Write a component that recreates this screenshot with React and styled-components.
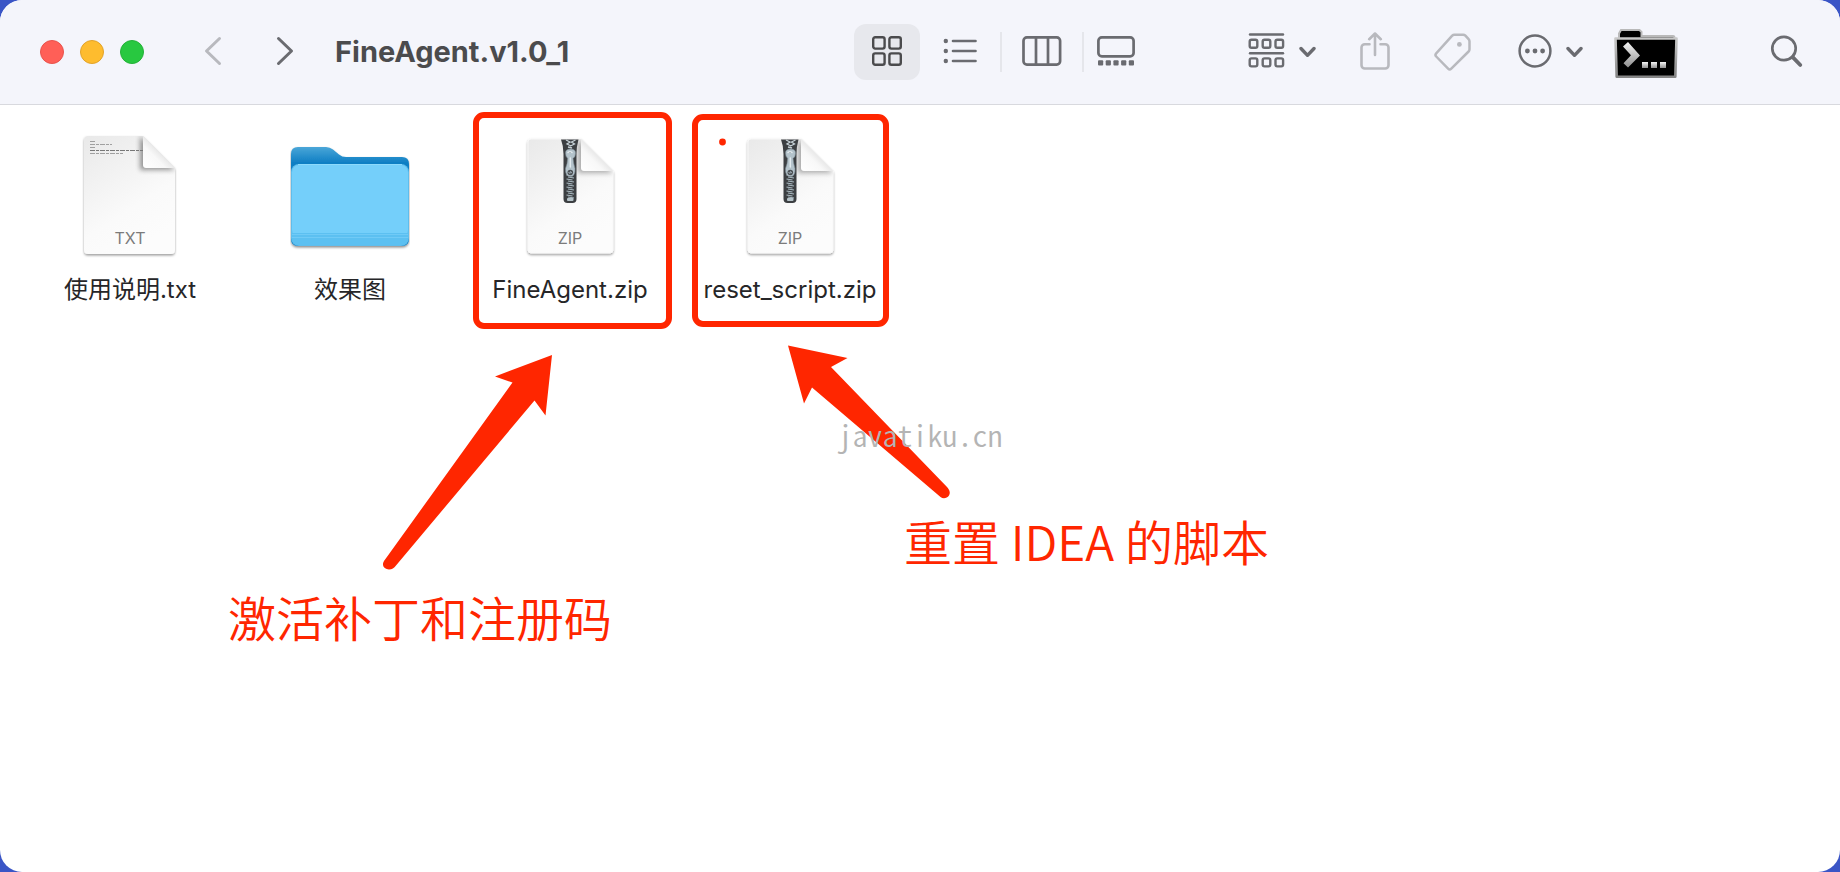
import React from 'react';
import styled, { createGlobalStyle } from 'styled-components';

const theme = {
  font: 'Inter, "Noto Sans CJK SC", sans-serif',
  desktop: '#3a55c6',
  toolbar: '#f4f5fb',
  line: '#d8d9de',
  icon: '#6a6b70',
  iconDim: '#b8b9be',
  red: '#ff2600',
};

const GlobalStyle = createGlobalStyle`
  * { box-sizing: border-box; }
  body {
    margin: 0;
    background: ${theme.desktop};
    font-family: ${theme.font};
  }
`;

const Window = styled.div`
  position: relative;
  display: flex;
  flex-direction: column;
  min-height: 100vh;
  overflow: hidden;
  border-radius: 22px;
  background: #fff;
`;

const Toolbar = styled.header`
  display: flex;
  align-items: center;
  height: 105px;
  padding: 0 37px 0 40px;
  background: ${theme.toolbar};
  border-bottom: 1px solid ${theme.line};
`;

const Plain = styled.button`
  display: flex;
  align-items: center;
  padding: 0;
  border: 0;
  background: none;
  color: ${props => (props.$dim ? theme.iconDim : theme.icon)};
  flex-shrink: 0;

  svg {
    display: block;
  }
`;

const Lights = styled.div`
  display: flex;
  gap: 16px;
`;

const Light = styled.button`
  width: 24px;
  height: 24px;
  padding: 0;
  border: 1px solid ${props => props.$edge};
  border-radius: 50%;
  background: ${props => props.$fill};
`;

const History = styled.nav`
  display: flex;
  gap: 52px;
  margin: 0 40px 0 59px;
`;

const Title = styled.h1`
  flex: 1;
  margin: 0;
  color: #4b4b4d;
  font-size: 29px;
  line-height: 36px;
  font-weight: 700;
  white-space: nowrap;
`;

const Views = styled.div`
  display: flex;
  align-items: center;
  gap: 7px;
  margin-right: 107px;
`;

const ViewButton = styled(Plain)`
  justify-content: center;
  width: ${props => (props.$narrow ? 50 : 66)}px;
  height: 56px;
  border-radius: 12px;
  background: ${props => (props.$active ? '#e7e8ed' : 'transparent')};
  color: ${props => (props.$active ? '#4b4b4d' : theme.icon)};
`;

const Divider = styled.span`
  width: 2px;
  height: 40px;
  background: #e5e6eb;
`;

const Tools = styled.div`
  display: flex;
  align-items: center;
  gap: 44px;
`;

const MenuButton = styled(Plain)`
  gap: 14px;
`;

const TerminalButton = styled(Plain)`
  margin: 0 92px 0 31px;
`;

const Files = styled.ul`
  display: grid;
  grid-template-columns: repeat(auto-fill, 220px);
  margin: 0;
  padding: 27px 20px;
  list-style: none;
`;

const File = styled.li`
  display: flex;
  flex-direction: column;
  align-items: center;
  gap: 16px;

  svg {
    display: block;
  }
`;

const FileName = styled.span`
  color: #262628;
  font-size: 24px;
  line-height: 28px;
  white-space: nowrap;
`;

const Kind = styled.text`
  fill: #7b7b7b;
  font-family: ${theme.font};
  font-size: 16px;
  text-anchor: middle;
`;

// Marks drawn over the window
const Frame = styled.div`
  position: absolute;
  left: ${props => props.$x}px;
  top: ${props => props.$y}px;
  width: ${props => props.$w}px;
  height: ${props => props.$h}px;
  border: 6px solid ${theme.red};
  border-radius: 11px;
`;

const Arrows = styled.svg`
  position: absolute;
  left: 0;
  top: 0;
  fill: ${theme.red};
  pointer-events: none;
`;

const Note = styled.p`
  position: absolute;
  left: ${props => props.$x}px;
  top: ${props => props.$y}px;
  margin: 0;
  color: ${theme.red};
  font-family: "Noto Sans CJK SC", sans-serif;
  font-size: 48px;
  line-height: 56px;
  font-weight: 350;
  white-space: nowrap;
`;

const Watermark = styled.div`
  position: absolute;
  inset: 0;
  display: flex;
  align-items: center;
  justify-content: center;
  padding-bottom: 4px;
  color: #b4b4b4;
  font-family: "Noto Sans CJK SC", monospace;
  font-feature-settings: "hwid";
  font-size: 30px;
  font-weight: 350;
  line-height: 32px;
  pointer-events: none;
`;

const line = {
  fill: 'none',
  stroke: 'currentColor',
  strokeWidth: 3,
  strokeLinecap: 'round',
  strokeLinejoin: 'round',
};

const Arrow = ({ d }) => (
  <svg width="20" height="32" viewBox="0 0 20 32" {...line}>
    <path d={d} />
  </svg>
);

const Caret = () => (
  <svg width="17" height="12" viewBox="0 0 17 12" {...line} strokeWidth="3.4">
    <path d="M2 2.5 8.5 9.3 15 2.5" />
  </svg>
);

const GridIcon = () => (
  <svg width="30" height="32" viewBox="0 0 30 32" {...line} strokeWidth="2.4">
    {[1.2, 17.4].map(y => [1.2, 17.4].map(x => (
      <rect key={`${x}-${y}`} x={x} y={y} width="11.4" height="11.4" rx="2" />
    )))}
  </svg>
);

const ListIcon = () => (
  <svg width="34" height="28" viewBox="0 0 34 28" {...line} strokeWidth="2.6">
    {[3, 13, 23].map(y => (
      <g key={y}>
        <circle cx="2.8" cy={y} r="2.2" fill="currentColor" stroke="none" />
        <path d={`M10 ${y}H32.5`} />
      </g>
    ))}
  </svg>
);

const ColumnsIcon = () => (
  <svg width="40" height="32" viewBox="0 0 40 32" {...line} strokeWidth="2.7">
    <rect x="1.5" y="1.4" width="36.6" height="27.2" rx="3.4" />
    <path d="M14 2v26M26 2v26" />
  </svg>
);

const GalleryIcon = () => (
  <svg width="38" height="32" viewBox="0 0 38 32" {...line} strokeWidth="2.7">
    <rect x="1.4" y="1.4" width="35.2" height="19" rx="3.4" />
    {[1, 8.7, 16.4, 24.1, 31.8].map(x => (
      <rect key={x} x={x} y="24.2" width="5.2" height="5.2" rx="1" fill="currentColor" stroke="none" />
    ))}
  </svg>
);

const GroupIcon = () => (
  <svg width="37" height="38" viewBox="0 0 37 38" {...line} strokeWidth="2.4">
    {[1.5, 20.2].map(y => (
      <g key={y}>
        <path d={`M2 ${y}H35`} />
        {[2, 15, 27.8].map(x => (
          <rect key={x} x={x - 0.3} y={y + 5.2} width="7.6" height="8" rx="1.8" />
        ))}
      </g>
    ))}
  </svg>
);

const ShareIcon = () => (
  <svg width="30" height="40" viewBox="0 0 30 40" {...line} strokeWidth="2.6">
    <path d="M9.5 12.2H4.8a3.3 3.3 0 0 0-3.3 3.3v17.7a3.3 3.3 0 0 0 3.3 3.3h20.4a3.3 3.3 0 0 0 3.3-3.3V15.5a3.3 3.3 0 0 0-3.3-3.3H20.5" />
    <path d="M15 23V1.500M9.200 7.200 15 1.500l5.800 5.700" />
  </svg>
);

const TagIcon = () => (
  <svg width="40" height="38" viewBox="0 0 40 38" {...line} strokeWidth="2.5">
    <path d="M20.4 1.7h8.8q1.3 0 2.2.9l3.2 3.6q.9 1 .9 2.3v7.8q0 1.3-.9 2.2L17.3 35.7q-1.6 1.6-3.2 0L2.2 23.5q-1.5-1.6 0-3.2L18.2 2.6q.9-.9 2.2-.9z" />
    <circle cx="25.4" cy="11.4" r="2.4" fill="currentColor" stroke="none" />
  </svg>
);

const MoreIcon = () => (
  <svg width="34" height="36" viewBox="0 0 34 36" {...line} strokeWidth="2.5">
    <circle cx="17" cy="17" r="15.4" />
    <g fill="currentColor" stroke="none">
      <circle cx="9.4" cy="17" r="2.4" />
      <circle cx="17" cy="17" r="2.4" />
      <circle cx="24.6" cy="17" r="2.4" />
    </g>
  </svg>
);

const TerminalIcon = () => (
  <svg width="64" height="52" viewBox="0 -2 64 52">
    <defs>
      <linearGradient id="prompt" x1="0" y1="0" x2="0" y2="1">
        <stop offset="0" stopColor="#f4f4f4" />
        <stop offset="1" stopColor="#8f8f8f" />
      </linearGradient>
      <linearGradient id="rim" x1="0" y1="0" x2="0" y2="1">
        <stop offset="0" stopColor="#c8c8c8" />
        <stop offset="1" stopColor="#858585" />
      </linearGradient>
    </defs>
    <path d="M5 12V5.5L7 2h18.500l2 2v4H59q1.500 0 1.500 2v4H5z" fill="#000" stroke="#b9b9b9" strokeWidth="2" />
    <path d="M1.500 10.500h61l-1.200 38.200H2.700z" fill="#000" stroke="url(#rim)" strokeWidth="2.6" strokeLinejoin="round" />
    <path d="M9 18.500l5-4.500 12 13.500L14 39.500l-4.500-4.200 7.500-8z" fill="url(#prompt)" />
    {[28, 37, 46].map(x => (
      <rect key={x} x={x} y="34" width="6" height="6" fill="url(#prompt)" />
    ))}
  </svg>
);

const SearchIcon = () => (
  <svg width="33" height="34" viewBox="0 0 33 34" {...line} strokeWidth="2.7">
    <circle cx="14" cy="13.5" r="11.7" />
    <path d="M22.7 22.2 30.3 30" strokeWidth="3.8" />
  </svg>
);

const DocDefs = ({ id }) => (
  <defs>
    <linearGradient id={`${id}-page`} x1="0" y1="0" x2="0.5" y2="1">
      <stop offset="0" stopColor="#e9e9e9" />
      <stop offset="0.7" stopColor="#fafafa" />
      <stop offset="1" stopColor="#fcfcfc" />
    </linearGradient>
    <linearGradient id={`${id}-fold`} x1="0" y1="1" x2="0.6" y2="0.4">
      <stop offset="0" stopColor="#ffffff" />
      <stop offset="0.6" stopColor="#f8f8f8" />
      <stop offset="1" stopColor="#dedede" />
    </linearGradient>
    <filter id={`${id}-drop`} x="-10%" y="-10%" width="120%" height="120%">
      <feDropShadow dx="0" dy="1.5" stdDeviation="1.2" floodOpacity="0.38" />
    </filter>
    <filter id={`${id}-soft`} x="-40%" y="-40%" width="180%" height="180%">
      <feGaussianBlur stdDeviation="2.5" />
    </filter>
  </defs>
);

const TextFileIcon = () => (
  <svg width="120" height="128" viewBox="0 0 120 128">
    <DocDefs id="txt" />
    <clipPath id="txt-clip">
      <path d="M18 4h55l32 32v82q0 4-4 4H18q-4 0-4-4V8q0-4 4-4z" />
    </clipPath>
    <path d="M18 4h55l32 32v82q0 4-4 4H18q-4 0-4-4V8q0-4 4-4z" fill="url(#txt-page)" filter="url(#txt-drop)" />
    <g clipPath="url(#txt-clip)">
      <path d="M70 4v34h35z" fill="#000" opacity="0.4" filter="url(#txt-soft)" />
    </g>
    <path d="M73 4v29q0 3 3 3h29z" fill="url(#txt-fold)" />
    <g stroke="#a0a0a0" strokeWidth="1" strokeDasharray="5 1 3 1">
      <path d="M20 9.5h5M20 12.5h22M20 15.5h5M20 21.5h33" />
      <path d="M20 18.5h53" stroke="#777" />
    </g>
    <Kind x="60" y="112">TXT</Kind>
  </svg>
);

const teeth = Array.from({ length: 12 }, (_, i) => 43 + i * 2);

const ZipFileIcon = ({ id }) => (
  <svg width="120" height="128" viewBox="0 0 120 128">
    <DocDefs id={id} />
    <clipPath id={`${id}-clip`}>
      <path d="M21 7h50l32 32v79q0 3-3 3H21q-3 0-3-3V10q0-3 3-3z" />
    </clipPath>
    <path d="M21 7h50l32 32v79q0 3-3 3H21q-3 0-3-3V10q0-3 3-3z" fill={`url(#${id}-page)`} stroke="#f8f8f8" filter={`url(#${id}-drop)`} />
    <g clipPath={`url(#${id}-clip)`}>
      <path d="M68 7v34h35z" fill="#000" opacity="0.3" filter={`url(#${id}-soft)`} />
    </g>
    <path d="M71 7v29q0 3 3 3h29z" fill={`url(#${id}-fold)`} />
    <path d="M51 7.500h17.500q-2 7-2 14V67q0 4-4 4h-5q-4 0-4-4V22q0-8-2.500-14.500z" fill="#3c3f42" />
    <path d="M56 8l4 2-3 2 4 2M65.500 8l-4 2 3 2-4 2M58 15l4 1" stroke="#c5d0d5" strokeWidth="1.3" fill="none" />
    {teeth.map((y, i) => (
      <path key={y} d={i % 2 ? `M58 ${y}l6 1` : `M56.5 ${y}l6 1`} stroke="#a9b9c0" strokeWidth="1.2" />
    ))}
    <rect x="57" y="66" width="6.5" height="3" rx="1" fill="#b6c3c9" />
    <path d="M55.500 21q0-4 5-4t5 4q0 4-2.500 5.500.500 5 2 10 .500 8-4.700 8t-4.800-8q2-5 2.200-10-2.200-1.500-2.200-5.500z" fill="#b3c2ca" stroke="#7e8c93" strokeWidth="0.6" />
    <path d="M58 20.500q2-1.500 4 0M60.300 26v9" stroke="#e3ebef" strokeWidth="1.5" strokeLinecap="round" />
    <ellipse cx="60.3" cy="40.5" rx="2.8" ry="2.7" fill="#4a4f53" />
    <path d="M58.500 40l1.300 1.500.8-2 1.400 1.800" stroke="#b3c2ca" strokeWidth="0.8" fill="none" />
    <Kind x="60" y="112">ZIP</Kind>
  </svg>
);

const FolderIcon = () => (
  <svg width="120" height="128" viewBox="0 0 120 128">
    <defs>
      <linearGradient id="back" x1="0" y1="0" x2="0" y2="1">
        <stop offset="0" stopColor="#4aa6d8" />
        <stop offset="0.16" stopColor="#0f7fc4" />
        <stop offset="1" stopColor="#0f7fc4" />
      </linearGradient>
      <filter id="folder-drop" x="-10%" y="-10%" width="120%" height="120%">
        <feDropShadow dx="0" dy="1.5" stdDeviation="1" floodOpacity="0.45" />
      </filter>
    </defs>
    <path d="M1 22q0-7 7-7h28q4 0 7 2.500l6 5q3 2.500 7 2.500h56q7 0 7 7v75q0 7-7 7H8q-7 0-7-7z" fill="url(#back)" filter="url(#folder-drop)" />
    <rect x="1" y="32" width="118" height="82" rx="8" fill="#5fbdec" />
    <rect x="2" y="33" width="116" height="72" rx="7" fill="#74cffa" />
    <path d="M2 101h116v5q0 7-7 7H9q-7 0-7-7z" fill="#5cc0f1" />
    <path d="M2 102.500h116M2 105.500h116" stroke="#70caf6" strokeWidth="1" />
    <path d="M8 32.500h104" stroke="#8cdafc" strokeWidth="1" />
  </svg>
);

const files = [
  { name: '使用说明.txt', icon: <TextFileIcon /> },
  { name: '效果图', icon: <FolderIcon /> },
  { name: 'FineAgent.zip', icon: <ZipFileIcon id="zip-a" /> },
  { name: 'reset_script.zip', icon: <ZipFileIcon id="zip-b" /> },
];

export default function App() {
  return (
    <>
      <GlobalStyle />
      <Window>
        <Toolbar>
          <Lights>
            <Light aria-label="Close" $fill="#ff5f57" $edge="#e8534c" />
            <Light aria-label="Minimize" $fill="#febc2e" $edge="#e2a32a" />
            <Light aria-label="Zoom" $fill="#28c840" $edge="#24b138" />
          </Lights>
          <History>
            <Plain $dim aria-label="Back"><Arrow d="M16.500 2.500 3.500 15l13 12.500" /></Plain>
            <Plain aria-label="Forward"><Arrow d="M3.500 2.500 16.500 15l-13 12.500" /></Plain>
          </History>
          <Title>FineAgent.v1.0_1</Title>

          <Views>
            <ViewButton $active aria-label="Icons"><GridIcon /></ViewButton>
            <ViewButton aria-label="List"><ListIcon /></ViewButton>
            <Divider />
            <ViewButton aria-label="Columns"><ColumnsIcon /></ViewButton>
            <Divider />
            <ViewButton $narrow aria-label="Gallery"><GalleryIcon /></ViewButton>
          </Views>

          <Tools>
            <MenuButton aria-label="Group"><GroupIcon /><Caret /></MenuButton>
            <Plain $dim aria-label="Share"><ShareIcon /></Plain>
            <Plain $dim aria-label="Tags"><TagIcon /></Plain>
            <MenuButton aria-label="More"><MoreIcon /><Caret /></MenuButton>
          </Tools>
          <TerminalButton aria-label="Terminal"><TerminalIcon /></TerminalButton>
          <Plain aria-label="Search"><SearchIcon /></Plain>
        </Toolbar>

        <Files>
          {files.map(file => (
            <File key={file.name}>
              {file.icon}
              <FileName>{file.name}</FileName>
            </File>
          ))}
        </Files>

        <Frame $x={473} $y={112} $w={199} $h={217} />
        <Frame $x={692} $y={114} $w={197} $h={213} />
        <Arrows width="1000" height="600" viewBox="0 0 1000 600">
          <circle cx="722.5" cy="142" r="3.4" />
          <path d="M552 355 495 376.500l17.500 6L384 561c-3 5 1 8.500 5 8.500 3 0 5-1.500 7-4l138.500-165 11 15z" />
          <path d="M788 345.500l59.500 12.500-16.500 9 116 120c3 3.500 3.500 6 2 8.500-2 3-6 3.500-8.500 1.500L812 387.500l-8 16z" />
        </Arrows>
        <Note $x={228} $y={588}>激活补丁和注册码</Note>
        <Note $x={904} $y={512}>重置 IDEA 的脚本</Note>
        <Watermark>javatiku.cn</Watermark>
      </Window>
    </>
  );
}
